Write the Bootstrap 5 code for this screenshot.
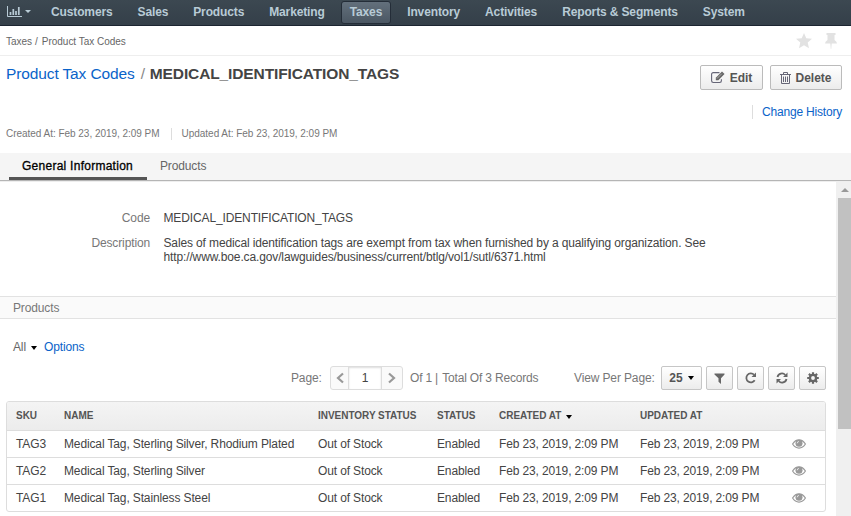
<!DOCTYPE html>
<html lang="en">
<head>
<meta charset="utf-8">
<meta name="viewport" content="width=device-width, initial-scale=1">
<title>Product Tax Codes</title>
<link href="https://cdn.jsdelivr.net/npm/bootstrap@5.3.0/dist/css/bootstrap.min.css" rel="stylesheet">
<style>
body{font-family:"Liberation Sans",Arial,sans-serif;font-size:12px;line-height:14px;letter-spacing:-.13px;color:#444;background:#fff;height:516px;overflow:hidden}
a{color:#0a63c9;text-decoration:none}
svg{display:block;flex:none}
.caret{width:0;height:0;border:3.5px solid transparent;border-top:4px solid #000;border-bottom:0;flex:none}
.topbar{height:26px;background:linear-gradient(#3c4851,#343f49);border-bottom:1px solid #1c2531;padding-left:7px}
.topbar .caret{border-top-color:#b8cbd6;border-left-width:3px;border-right-width:3px;border-top-width:3px}
.dash{width:35px;gap:3px;height:22px}
.menu{gap:7px}
.menu a{height:23px;line-height:21px;padding:0 8px;border:1px solid transparent;border-radius:3px;font-weight:bold;color:#b8cbd6;margin-top:1px;white-space:nowrap}
.menu a.active{background:linear-gradient(#63707c,#4b5763);border-color:#242d38}
.crumbs{height:30px;border-bottom:1px solid #eee;font-size:10px;letter-spacing:-.02px;color:#666;padding:2px 14px 0 6px}
.crumbs a{color:#666}
.crumbs .slash{margin:0 4px 0 3px}
.crumbs .shortcuts{gap:13px;margin-top:-2px}
.heading{height:97px;padding:9px 9px 0 6px}
.title{font-size:15.5px;line-height:18px;letter-spacing:-.12px}
.title .slash{color:#888;margin:0 5px 0 6px}
.actions{gap:7px}.bt-edit{width:63px;gap:5px}.bt-del{width:72px;gap:4px}
.history{margin-top:15px;letter-spacing:-.2px}
.history a{border-left:1px solid #ddd;padding-left:9px}
.obtn{height:25px;border:1px solid #bbb;border-radius:2px;background:linear-gradient(#fff,#ececec);color:#555;font-weight:bold;font-size:12px;line-height:14px;padding:0}
.meta{font-size:10px;line-height:12px;letter-spacing:-.03px;color:#777;margin-top:9px}
.meta .second{border-left:1px solid #ddd;margin-left:11px;padding-left:10px}
.tabs{height:28px;background:#f5f5f5;border-bottom:1px solid #b5b5b5;padding-left:9px}
.tabs a{color:#666;height:27px;padding:6px 13px 0;border-bottom:3px solid transparent}
.tabs a.active{color:#000;border-color:#555;width:138px;-webkit-text-stroke:.3px #000;letter-spacing:.26px}
.pane{height:335px;border-top:1px solid #eee}
.fields{height:114px;padding-top:29px}
.fields .mt-fields{margin-top:11px}
.flabel{width:150px;color:#777;text-align:right}
.fval{padding-left:13.5px}
.section-title{height:23px;background:#fafafa;border:solid #e2e2e2;border-width:1px 0;color:#777;padding:4px 13px}
.viewbar{height:47px;padding:21px 0 0 13px;color:#666}
.view-caret{margin:6px 7px 0 5px}
.tools{height:24px;color:#777}
.tools .obtn{height:24px;width:27px;border-color:#c6c6c6}
.tools .size-btn{width:41px;gap:5px}
.pager{height:24px;width:73px;border:1px solid #ddd;border-radius:3px;background:#fafafa}
.pager input{width:34px;height:22px;border:solid #ddd;border-width:0 1px;text-align:center;font-size:12px;color:#444;padding:0 0 1px;box-shadow:inset 0 1px 2px #ddd}
.t-page{margin-left:291px;width:39px}.t-total{margin-left:7px;width:164px;white-space:nowrap;letter-spacing:-.18px}.t-total span{margin-left:1px}.t-view{white-space:nowrap;width:84px}
.t-buttons{margin-left:3px;gap:4px}
.gridbox{width:820px;margin:11px 0 0 6px;border:1px solid #ddd;border-radius:3px;overflow:hidden}
.gridbox table{table-layout:fixed;width:818px;margin:0;color:#444}
.gridbox th{height:28px;padding:0 0 0 9px;font-size:10px;color:#555;border:0;background:linear-gradient(#f4f4f4,#ececec);vertical-align:middle;white-space:nowrap;letter-spacing:-.03px}
.gridbox th .caret{margin-left:2px}
.gridbox td{height:27px;padding:1px 0 0 9px;border:0;border-top:1px solid #ddd;vertical-align:middle;white-space:nowrap}
.scroll{width:15px;background:#f0f0f0;padding:6px 0 0 2px}
.scroll .up{width:0;height:0;border:4px solid transparent;border-top:0;border-bottom:4px solid #999;margin:0 0 6px 3px}
.scroll .thumb{height:231px;background:#c1c1c1}
</style>
<script src="https://cdn.jsdelivr.net/npm/bootstrap@5.3.0/dist/js/bootstrap.bundle.min.js"></script>
</head>
<body>
<svg class="d-none">
<symbol id="eye" viewBox="0 0 14 10"><path d="M.6 5Q3.200.9 7 .9T13.400 5Q10.800 9.100 7 9.100T.6 5Z" fill="none" stroke="#999" stroke-width="1.200"/><circle cx="7" cy="4.300" r="3.500" fill="#999"/><path d="M5.200 4.300Q5.200 2.500 7 2.500" fill="none" stroke="#fff" stroke-width=".7"/></symbol>
</svg>
<nav class="topbar d-flex">
 <div class="dash d-flex align-items-center">
  <svg width="15" height="11" fill="none" stroke="#b8cbd6"><path d="M.5 0v10.500H15"/><path stroke-width="1.700" d="M3.500 9V6M6.300 9V3M9 9V5M11.800 9V1"/></svg><span class="caret"></span>
 </div>
 <div class="menu d-flex">
  <a href="#">Customers</a><a href="#">Sales</a><a href="#">Products</a><a href="#">Marketing</a><a href="#" class="active">Taxes</a><a href="#">Inventory</a><a href="#">Activities</a><a href="#">Reports &amp; Segments</a><a href="#">System</a>
 </div>
</nav>
<div class="crumbs d-flex align-items-center">
 <a href="#">Taxes</a><span class="slash">/</span><a href="#">Product Tax Codes</a>
 <div class="shortcuts d-flex ms-auto">
 <svg width="16" height="16" viewBox="0 0 16 16"><path fill="#e2e2e2" d="M8 0l2.300 5.300 5.700.5-4.300 3.800L13 15.300l-5-3-5 3 1.300-5.700L0 5.800l5.700-.5z"/></svg>
 <svg width="12" height="16" viewBox="0 0 12 16"><path fill="#e2e2e2" d="M1.500 0h9v2H9.500v5Q12 8.500 12 10.500H6.700L6.200 16h-.4L5.300 10.500H0Q0 8.500 2.500 7V2h-1z"/></svg>
 </div>
</div>
<header class="heading">
 <div class="d-flex justify-content-between">
  <div class="title d-flex"><a href="#">Product Tax Codes</a><span class="slash">/</span><b>MEDICAL_IDENTIFICATION_TAGS</b></div>
  <div class="d-flex actions">
   <button class="btn obtn bt-edit d-flex align-items-center justify-content-center"><svg width="14" height="13" viewBox="0 0 14 13"><path d="M8.500 1.600H2.300Q.6 1.600.6 3.300v6.500Q.6 11.500 2.300 11.500h6.400q1.700 0 1.700-1.700V8.200" fill="none" stroke="#667" stroke-width="1.100"/><path d="M4.800 9.200V6.700L11 .5 13.500 3 7.300 9.200z" fill="#666"/><path d="M6 7.500L10.800 2.700" stroke="#ddd" stroke-width=".6"/></svg>Edit</button>
   <button class="btn obtn bt-del d-flex align-items-center justify-content-center"><svg width="11" height="12" viewBox="0 0 11 12" fill="none" stroke="#667"><path d="M0 2.500h11M3.500 2.500V.5h4v2M1.500 2.500v9h8v-9M3.500 4.500V10M5.500 4.500V10M7.500 4.500V10"/></svg>Delete</button>
  </div>
 </div>
 <div class="d-flex justify-content-end history"><a href="#">Change History</a></div>
 <div class="meta d-flex"><span>Created At: Feb 23, 2019, 2:09 PM</span><span class="second">Updated At: Feb 23, 2019, 2:09 PM</span></div>
</header>
<div class="tabs d-flex"><a href="#" class="active">General Information</a><a href="#">Products</a></div>
<main class="pane d-flex">
 <div class="flex-grow-1">
  <div class="fields">
   <div class="d-flex"><div class="flabel">Code</div><div class="fval">MEDICAL_IDENTIFICATION_TAGS</div></div>
   <div class="d-flex mt-fields"><div class="flabel">Description</div><div class="fval">Sales of medical identification tags are exempt from tax when furnished by a qualifying organization. See<br>http://www.boe.ca.gov/lawguides/business/current/btlg/vol1/sutl/6371.html</div></div>
  </div>
  <div class="section-title">Products</div>
  <div class="viewbar d-flex"><span>All</span><span class="caret view-caret"></span><a href="#">Options</a></div>
  <div class="tools d-flex align-items-center">
   <span class="t-page">Page:</span>
   <div class="pager d-flex align-items-center"><svg width="17" height="12" fill="none" stroke="#999" stroke-width="2.200"><path d="M12 1.500L7 6l5 4.500"/></svg><input value="1" aria-label="Page"><svg width="20" height="12" fill="none" stroke="#999" stroke-width="2.200"><path d="M7 1.500L12 6l-5 4.500"/></svg></div>
   <span class="t-total">Of 1 | <span>Total Of 3 Records</span></span>
   <span class="t-view">View Per Page:</span>
   <div class="d-flex t-buttons">
    <button class="btn obtn size-btn d-flex align-items-center justify-content-center">25<span class="caret"></span></button>
    <button class="btn obtn d-flex align-items-center justify-content-center"><svg width="11" height="11"><path fill="#666" d="M.5.500h10v1L7 5.300V11L4.500 8.800V5.300L.5 1.500z"/></svg></button>
    <button class="btn obtn d-flex align-items-center justify-content-center"><svg width="12" height="12" fill="none" stroke="#666" stroke-width="1.800"><path d="M9.700 8.300A4.500 4.500 0 1 1 9 2.700"/><path d="M11 .5V5H6.500z" fill="#666" stroke="none"/></svg></button>
    <button class="btn obtn d-flex align-items-center justify-content-center"><svg width="12" height="12" fill="none" stroke="#666" stroke-width="1.800"><path d="M1.500 5A4.500 4.500 0 0 1 9.300 3M10.500 7A4.500 4.500 0 0 1 2.700 9"/><path d="M11.500.5V5H7zM.5 11.500V7H5z" fill="#666" stroke="none"/></svg></button>
    <button class="btn obtn d-flex align-items-center justify-content-center"><svg width="12" height="12"><circle cx="6" cy="6" r="3.100" fill="none" stroke="#666" stroke-width="2.400"/><path d="M6 .2v2.300M6 9.500v2.300M.2 6h2.300M9.500 6h2.300M1.900 1.900l1.600 1.600M8.500 8.500l1.600 1.600M10.100 1.900L8.500 3.500M3.500 8.500l-1.600 1.600" stroke="#666" stroke-width="2.200"/></svg></button>
   </div>
  </div>
  <div class="gridbox">
   <table class="table">
    <colgroup><col style="width:48px"><col style="width:254px"><col style="width:119px"><col style="width:62px"><col style="width:141px"><col style="width:152px"><col></colgroup>
    <thead><tr><th>SKU</th><th>NAME</th><th>INVENTORY STATUS</th><th>STATUS</th><th>CREATED AT <span class="caret d-inline-block"></span></th><th>UPDATED AT</th><th></th></tr></thead>
    <tbody>
     <tr><td>TAG3</td><td>Medical Tag, Sterling Silver, Rhodium Plated</td><td>Out of Stock</td><td>Enabled</td><td>Feb 23, 2019, 2:09 PM</td><td>Feb 23, 2019, 2:09 PM</td><td><svg width="14" height="10"><use href="#eye"/></svg></td></tr>
     <tr><td>TAG2</td><td>Medical Tag, Sterling Silver</td><td>Out of Stock</td><td>Enabled</td><td>Feb 23, 2019, 2:09 PM</td><td>Feb 23, 2019, 2:09 PM</td><td><svg width="14" height="10"><use href="#eye"/></svg></td></tr>
     <tr><td>TAG1</td><td>Medical Tag, Stainless Steel</td><td>Out of Stock</td><td>Enabled</td><td>Feb 23, 2019, 2:09 PM</td><td>Feb 23, 2019, 2:09 PM</td><td><svg width="14" height="10"><use href="#eye"/></svg></td></tr>
    </tbody>
   </table>
  </div>
 </div>
 <div class="scroll"><div class="up"></div><div class="thumb"></div></div>
</main>
</body>
</html>
